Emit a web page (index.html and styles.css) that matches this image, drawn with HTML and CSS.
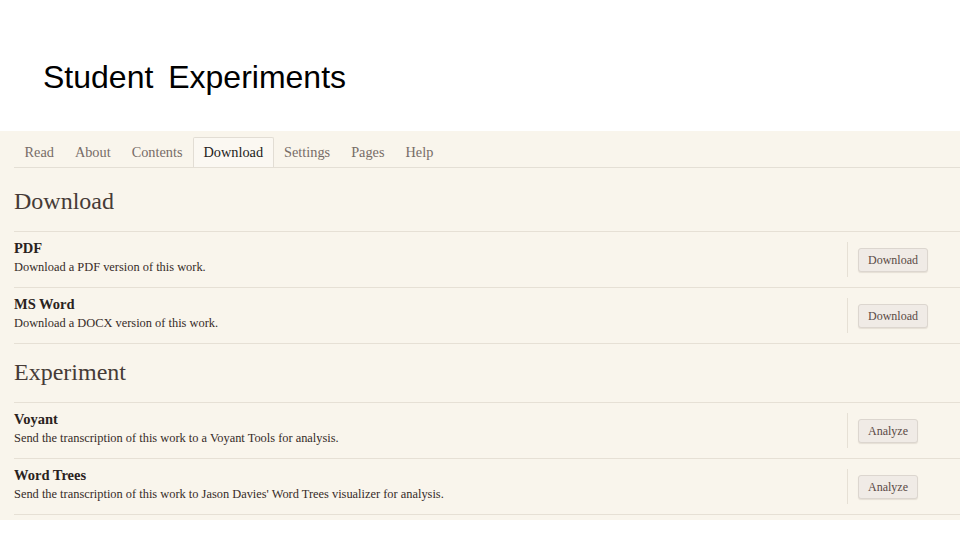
FILE: index.html
```html
<!DOCTYPE html>
<html lang="en">
<head>
<meta charset="utf-8">
<title>Student Experiments</title>
<link rel="stylesheet" href="styles.css">
</head>
<body>
<header class="slide-head">
  <h1 class="slide-title">Student Experiments</h1>
</header>
<main class="panel">
  <nav class="tabs">
    <a class="tab">Read</a>
    <a class="tab">About</a>
    <a class="tab">Contents</a>
    <a class="tab tab-active">Download</a>
    <a class="tab">Settings</a>
    <a class="tab">Pages</a>
    <a class="tab">Help</a>
  </nav>
  <h2 class="section-title">Download</h2>
  <div class="row">
    <div class="row-text">
      <div class="row-title">PDF</div>
      <div class="row-desc">Download a PDF version of this work.</div>
    </div>
    <div class="row-action"><button class="btn">Download</button></div>
  </div>
  <div class="row">
    <div class="row-text">
      <div class="row-title">MS Word</div>
      <div class="row-desc">Download a DOCX version of this work.</div>
    </div>
    <div class="row-action"><button class="btn">Download</button></div>
  </div>
  <h2 class="section-title">Experiment</h2>
  <div class="row">
    <div class="row-text">
      <div class="row-title">Voyant</div>
      <div class="row-desc">Send the transcription of this work to a Voyant Tools for analysis.</div>
    </div>
    <div class="row-action"><button class="btn">Analyze</button></div>
  </div>
  <div class="row">
    <div class="row-text">
      <div class="row-title">Word Trees</div>
      <div class="row-desc">Send the transcription of this work to Jason Davies' Word Trees visualizer for analysis.</div>
    </div>
    <div class="row-action"><button class="btn">Analyze</button></div>
  </div>
</main>
</body>
</html>
```
FILE: styles.css
```css
html, body {
  margin: 0;
  padding: 0;
  background: #ffffff;
}
.slide-head {
  height: 131px;
  box-sizing: border-box;
  padding: 59px 0 0 43px;
}
.slide-title {
  margin: 0;
  font-family: "Liberation Sans", Arial, sans-serif;
  font-weight: normal;
  font-size: 32px;
  line-height: 36px;
  word-spacing: 6px;
  color: #000000;
}
.panel {
  background: #f9f5ec;
  padding: 6px 0 5px 14px;
  font-family: "Liberation Serif", "Times New Roman", serif;
}
.tabs {
  display: flex;
  border-bottom: 1px solid #e4dfd5;
  margin-bottom: 5px;
}
.tab {
  padding: 4px 9.5px 5px;
  border: 1px solid transparent;
  border-bottom: none;
  font-size: 14.3px;
  line-height: 20px;
  color: #776c67;
  border-radius: 2px 2px 0 0;
}
.tab-active {
  background: #fbf8f2;
  border-color: #e2ddd4;
  color: #231c1a;
}
.section-title {
  margin: 0;
  padding: 13px 0 15px;
  font-size: 24px;
  line-height: 30px;
  font-weight: normal;
  color: #463b37;
  border-bottom: 1px solid #e6e0d5;
}
.row {
  display: flex;
  align-items: flex-start;
  height: 55px;
  border-bottom: 1px solid #e6e0d5;
}
.row-text {
  flex: 1;
  padding-top: 7px;
}
.row-title {
  font-size: 14.5px;
  line-height: 18px;
  font-weight: bold;
  color: #2a2220;
}
.row-desc {
  font-size: 12.4px;
  line-height: 16px;
  margin-top: 2px;
  color: #362b28;
}
.row-action {
  align-self: center;
  width: 102px;
  height: 35px;
  border-left: 1px solid #e6e0d5;
  padding-left: 10px;
  display: flex;
  align-items: center;
}
.btn {
  font-family: "Liberation Serif", "Times New Roman", serif;
  font-size: 12px;
  line-height: 16px;
  height: 24px;
  padding: 0 9px;
  background: #f0ebe6;
  border: 1px solid #dcd6cf;
  border-radius: 3px;
  box-shadow: 0 1px 1px rgba(120, 100, 90, 0.15);
  color: #5a4a45;
}
```
